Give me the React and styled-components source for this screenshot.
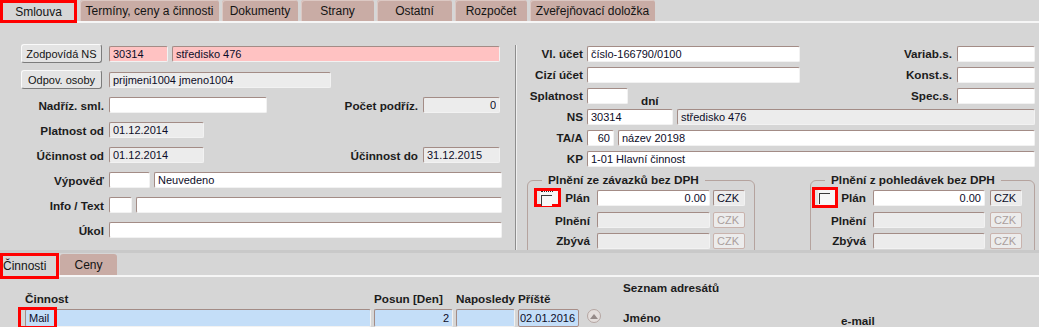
import React from "react";
import styled, { createGlobalStyle } from "styled-components";

const GlobalStyle = createGlobalStyle`
  html, body {
    margin: 0;
    padding: 0;
  }
  body {
    background: #d6d6d6;
    font-family: "Liberation Sans", Arial, sans-serif;
    font-size: 11px;
    color: #1a1a1a;
  }
  * {
    box-sizing: border-box;
  }
`;

const tones = {
  white: "#ffffff",
  gray: "#ececec",
  pink: "#ffc2c2",
  blue: "#c4def8",
};

const Page = styled.div`
  width: 1039px;
  height: 327px;
  overflow: hidden;
`;

const TabBar = styled.div`
  display: flex;
  align-items: flex-start;
  gap: 3px;
  height: 23px;
  box-shadow: inset 0 -2px 0 #f6f6f6;
`;

const Tab = styled.div`
  width: ${(p) => p.$w}px;
  height: ${(p) => (p.$active ? 23 : 21)}px;
  flex: none;
  display: flex;
  align-items: center;
  justify-content: center;
  font-size: 12px;
  color: #141414;
  background: ${(p) => (p.$active ? "#d6d6d6" : "#c9aca5")};
  border: ${(p) => (p.$active ? "3px solid #ff0000" : "none")};
  border-radius: ${(p) => (p.$active ? "0" : "3px 3px 0 0")};
  box-shadow: ${(p) => (p.$active ? "none" : "inset 1px 1px 0 #dcc8c3")};
`;

const Main = styled.div`
  display: flex;
  height: 227px;
  overflow: hidden;
`;

const LeftPanel = styled.div`
  width: 515px;
  flex: none;
  display: flex;
  flex-direction: column;
  gap: 7px;
  padding: 21px 0 0 20px;
`;

const Divider = styled.div`
  width: 2px;
  flex: none;
  margin-top: 22px;
  border-left: 1px solid #8e8e8e;
  border-right: 1px solid #efefef;
`;

const RightPanel = styled.div`
  flex: 1;
  display: flex;
  flex-direction: column;
  gap: 4px;
  padding: 22px 5px 0 0;
`;

const Row = styled.div`
  display: flex;
  align-items: center;
  height: ${(p) => p.$h || 17}px;
  flex: none;
`;

const Label = styled.span`
  width: ${(p) => (p.$w ? `${p.$w}px` : "auto")};
  flex: ${(p) => (p.$w ? "none" : "1")};
  margin-right: ${(p) => (p.$mr === undefined ? 5 : p.$mr)}px;
  text-align: right;
  font-size: 11.7px;
  font-weight: bold;
  white-space: nowrap;
  color: #1c1c1c;
`;

const Field = styled.input.attrs({ readOnly: true, tabIndex: -1 })`
  width: ${(p) => (p.$w ? `${p.$w}px` : "auto")};
  min-width: 0;
  flex: ${(p) => (p.$w ? "none" : "1")};
  height: ${(p) => p.$h || 16}px;
  margin: 0 0 0 ${(p) => p.$ml || 0}px;
  padding: 0 ${(p) => (p.$tight ? 1 : 3)}px;
  background: ${(p) => tones[p.$tone || "white"]};
  border: 1px solid;
  border-color: ${(p) =>
    p.$framed ? "#a88e88" : "#a38c86 #f2f2f2 #f2f2f2 #a38c86"};
  border-radius: 2px;
  font-family: "Liberation Sans", Arial, sans-serif;
  font-size: 11px;
  color: #0c0c28;
  text-align: ${(p) => (p.$right ? "right" : "left")};
  outline: none;
`;

const Btn = styled.button`
  width: 81px;
  height: 19px;
  flex: none;
  margin: 0 7px 0 1px;
  padding: 0;
  font-family: "Liberation Sans", Arial, sans-serif;
  font-size: 11px;
  color: #141414;
  background: #e4e4e4;
  border: 1px solid;
  border-color: #fafafa #7c7c7c #7c7c7c #fafafa;
  border-radius: 3px;
`;

const Unit = styled.span`
  align-self: flex-start;
  padding-top: 7px;
  margin-left: 13px;
  font-size: 11.7px;
  font-weight: bold;
`;

const Groups = styled.div`
  display: flex;
  gap: 55px;
  margin: 3px 0 0 10px;
`;

const Group = styled.fieldset`
  width: ${(p) => p.$w}px;
  flex: none;
  margin: 0;
  padding: 0;
  border: 1px solid #b5a39e;
  border-radius: 6px;
  display: flex;
  flex-direction: column;
  gap: 4px;
  min-height: 90px;
`;

const Legend = styled.legend`
  margin-left: 14px;
  padding: 0 6px;
  font-size: 11.8px;
  font-weight: bold;
  line-height: 13px;
  color: #1c1c1c;
`;

const GroupRow = styled.div`
  display: flex;
  align-items: center;
  height: ${(p) => p.$h || 16}px;
`;

const GroupLabel = styled.span`
  width: ${(p) => p.$w}px;
  flex: none;
  display: flex;
  align-items: center;
  justify-content: ${(p) => (p.$split ? "space-between" : "flex-end")};
  padding-left: ${(p) => p.$pl}px;
  margin-right: 7px;
  font-size: 11.7px;
  font-weight: bold;
  color: #1c1c1c;
`;

const FocusBox = styled.span`
  width: ${(p) => p.$w}px;
  height: ${(p) => p.$h}px;
  flex: none;
  display: flex;
  align-items: flex-start;
  padding: ${(p) => p.$pt}px 0 0 ${(p) => p.$pl}px;
  border: 3px solid #ff0000;
  background: linear-gradient(90deg, #e6e6e6 0 3px, #f6f6f6 3px);
`;

const Check = styled.span`
  position: relative;
  width: 11px;
  height: 11px;
  border-top: 1px solid #3a3a3a;
  border-left: 1px solid #3a3a3a;
  background: #f8f8f8;

  &::before {
    content: "";
    display: ${(p) => (p.$focus ? "block" : "none")};
    position: absolute;
    left: -1px;
    top: -5px;
    width: 12px;
    border-top: 1px dotted #2a2a2a;
  }
`;

const Currency = styled.span`
  width: 32px;
  height: 16px;
  flex: none;
  margin-left: ${(p) => p.$ml}px;
  padding-left: 3px;
  display: flex;
  align-items: center;
  font-size: 11px;
  background: #ececec;
  border: 1px solid;
  border-color: ${(p) =>
    p.$off ? "#c9b3ad" : "#a38c86 #f2f2f2 #f2f2f2 #a38c86"};
  border-radius: 2px;
  color: ${(p) => (p.$off ? "#aa9e9c" : "#0c0c28")};
`;

const BottomSection = styled.div`
  border-top: 3px solid #c9c9c9;
`;

const SubTabBar = styled.div`
  display: flex;
  align-items: flex-start;
  gap: 1px;
  height: 24px;
  box-shadow: inset 0 -2px 0 #f6f6f6;
`;

const SubTab = styled.div`
  width: ${(p) => p.$w}px;
  height: ${(p) => (p.$active ? 26 : 21)}px;
  flex: none;
  margin-top: ${(p) => (p.$active ? 0 : 1)}px;
  display: flex;
  align-items: center;
  justify-content: ${(p) => (p.$active ? "flex-start" : "center")};
  font-size: 12px;
  color: #141414;
  background: ${(p) => (p.$active ? "#d6d6d6" : "#c9aca5")};
  border: ${(p) => (p.$active ? "3px solid #ff0000" : "none")};
  border-radius: ${(p) => (p.$active ? "0" : "3px 3px 0 0")};
`;

const BottomContent = styled.div`
  display: flex;
  padding-top: 4px;
`;

const ActivityGrid = styled.div`
  display: grid;
  grid-template-columns: 346px 79px 59px 61px 19px;
  grid-template-rows: 13px 18px;
  column-gap: 3px;
  row-gap: 4px;
  padding: 11px 0 0 25px;
  align-items: center;
`;

const ColHead = styled.span`
  font-size: 11.7px;
  font-weight: bold;
  line-height: 13px;
  white-space: nowrap;
  color: #1c1c1c;
`;

const MailCell = styled.div`
  position: relative;
  display: flex;
`;

const RedMark = styled.span`
  position: absolute;
  left: -7px;
  top: -2px;
  width: 39px;
  height: 22px;
  border: 3px solid #ff0000;
  pointer-events: none;
`;

const ScrollUp = styled.span`
  width: 14px;
  height: 14px;
  margin-left: 5px;
  align-self: start;
  border: 1px solid #b5a6a2;
  border-radius: 50%;
  background: #e4dedc;
  display: flex;
  align-items: center;
  justify-content: center;
`;

const Addresses = styled.div`
  margin-left: 22px;
  display: flex;
  flex-direction: column;
`;

const AddrTitle = styled.span`
  font-size: 11.7px;
  font-weight: bold;
  line-height: 13px;
  color: #1c1c1c;
`;

const AddrHead = styled.div`
  display: flex;
  margin-top: 17px;
  font-size: 11.7px;
  font-weight: bold;
  line-height: 13px;
  color: #1c1c1c;
`;

const AddrCol = styled.span`
  width: ${(p) => p.$w}px;
  padding-top: ${(p) => p.$pt || 0}px;
`;

const topTabs = [
  ["Smlouva", 77],
  ["Termíny, ceny a činnosti", 139],
  ["Dokumenty", 76],
  ["Strany", 73],
  ["Ostatní", 75],
  ["Rozpočet", 72],
  ["Zveřejňovací doložka", 125],
];

function PaymentGroup({ title, width, labelW, labelPl, boxW, boxH, boxPt, boxPl, fieldW, czkGap, focus }) {
  return (
    <Group $w={width}>
      <Legend>{title}</Legend>
      <GroupRow $h={21}>
        <GroupLabel $w={labelW} $pl={labelPl} $split>
          <FocusBox $w={boxW} $h={boxH} $pt={boxPt} $pl={boxPl}>
            <Check $focus={focus} />
          </FocusBox>
          Plán
        </GroupLabel>
        <Field $w={fieldW} $right value="0.00" />
        <Currency $ml={czkGap}>CZK</Currency>
      </GroupRow>
      <GroupRow>
        <GroupLabel $w={labelW} $pl={labelPl}>Plnění</GroupLabel>
        <Field $w={fieldW} $tone="gray" value="" />
        <Currency $ml={czkGap} $off>CZK</Currency>
      </GroupRow>
      <GroupRow $h={17}>
        <GroupLabel $w={labelW} $pl={labelPl}>Zbývá</GroupLabel>
        <Field $w={fieldW} $tone="gray" value="" />
        <Currency $ml={czkGap} $off>CZK</Currency>
      </GroupRow>
    </Group>
  );
}

export default function App() {
  return (
    <Page>
      <GlobalStyle />
      <TabBar>
        {topTabs.map(([name, w], i) => (
          <Tab key={name} $w={w} $active={i === 0}>
            {name}
          </Tab>
        ))}
      </TabBar>

      <Main>
        <LeftPanel>
          <Row $h={19}>
            <Btn>Zodpovídá NS</Btn>
            <Field $w={59} $tone="pink" value="30314" />
            <Field $w={328} $ml={4} $tone="pink" value="středisko 476" />
          </Row>
          <Row $h={19}>
            <Btn>Odpov. osoby</Btn>
            <Field $w={222} $tone="gray" value="prijmeni1004 jmeno1004" />
          </Row>
          <Row $h={18}>
            <Label $w={84}>Nadříz. sml.</Label>
            <Field $w={158} value="" />
            <Label $w={151}>Počet podříz.</Label>
            <Field $w={77} $tone="gray" $right value="0" />
          </Row>
          <Row $h={18}>
            <Label $w={84}>Platnost od</Label>
            <Field $w={95} $tone="gray" value="01.12.2014" />
          </Row>
          <Row $h={18}>
            <Label $w={84}>Účinnost od</Label>
            <Field $w={95} $tone="gray" value="01.12.2014" />
            <Label $w={214}>Účinnost do</Label>
            <Field $w={77} $tone="gray" value="31.12.2015" />
          </Row>
          <Row $h={18}>
            <Label $w={84}>Výpověď</Label>
            <Field $w={41} value="" />
            <Field $w={348} $ml={4} value="Neuvedeno" />
          </Row>
          <Row $h={18}>
            <Label $w={84}>Info / Text</Label>
            <Field $w={23} value="" />
            <Field $w={366} $ml={4} value="" />
          </Row>
          <Row $h={18}>
            <Label $w={84}>Úkol</Label>
            <Field $w={393} value="" />
          </Row>
        </LeftPanel>

        <Divider />

        <RightPanel>
          <Row>
            <Label $w={66} $mr={4}>Vl. účet</Label>
            <Field $w={213} value="číslo-166790/0100" />
            <Label>Variab.s.</Label>
            <Field $w={78} value="" />
          </Row>
          <Row>
            <Label $w={66} $mr={4}>Cizí účet</Label>
            <Field $w={213} value="" />
            <Label>Konst.s.</Label>
            <Field $w={78} value="" />
          </Row>
          <Row>
            <Label $w={66} $mr={4}>Splatnost</Label>
            <Field $w={41} value="" />
            <Unit>dní</Unit>
            <Label>Spec.s.</Label>
            <Field $w={78} value="" />
          </Row>
          <Row>
            <Label $w={66} $mr={4}>NS</Label>
            <Field $w={86} value="30314" />
            <Field $ml={4} $tone="gray" value="středisko 476" />
          </Row>
          <Row>
            <Label $w={66} $mr={4}>TA/A</Label>
            <Field $w={27} $right value="60" />
            <Field $ml={4} value="název 20198" />
          </Row>
          <Row>
            <Label $w={66} $mr={4}>KP</Label>
            <Field value="1-01 Hlavní činnost" />
          </Row>

          <Groups>
            <PaymentGroup
              title="Plnění ze závazků bez DPH"
              width={228}
              labelW={62}
              labelPl={6}
              boxW={27}
              boxH={19}
              boxPt={4}
              boxPl={4}
              fieldW={113}
              czkGap={3}
              focus
            />
            <PaymentGroup
              title="Plnění z pohledávek bez DPH"
              width={225}
              labelW={55}
              labelPl={1}
              boxW={26}
              boxH={21}
              boxPt={3}
              boxPl={4}
              fieldW={112}
              czkGap={5}
            />
          </Groups>
        </RightPanel>
      </Main>

      <BottomSection>
        <SubTabBar>
          <SubTab $w={59} $active>Činnosti</SubTab>
          <SubTab $w={57}>Ceny</SubTab>
        </SubTabBar>

        <BottomContent>
          <ActivityGrid>
            <ColHead>Činnost</ColHead>
            <ColHead>Posun [Den]</ColHead>
            <ColHead>Naposledy</ColHead>
            <ColHead>Příště</ColHead>
            <span />

            <MailCell>
              <Field $h={18} $tone="blue" value="Mail" style={{ width: "100%" }} />
              <RedMark />
            </MailCell>
            <Field $w={79} $h={18} $tone="blue" $right value="2" />
            <Field $w={59} $h={18} $tone="blue" value="" />
            <Field $w={61} $h={18} $tone="blue" $framed $tight value="02.01.2016" />
            <ScrollUp>
              <svg width="8" height="5" viewBox="0 0 8 5">
                <path d="M0 5 L4 0 L8 5 Z" fill="#958a88" />
              </svg>
            </ScrollUp>
          </ActivityGrid>

          <Addresses>
            <AddrTitle>Seznam adresátů</AddrTitle>
            <AddrHead>
              <AddrCol $w={218}>Jméno</AddrCol>
              <AddrCol $w={100} $pt={3}>e-mail</AddrCol>
            </AddrHead>
          </Addresses>
        </BottomContent>
      </BottomSection>
    </Page>
  );
}
